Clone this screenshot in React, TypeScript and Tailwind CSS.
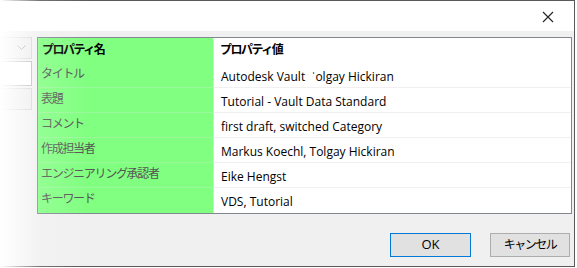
import React from 'react';

type Row = { label: string; value: string };

const rows: Row[] = [
  { label: 'タイトル', value: 'Autodesk Vault  ˈolgay Hickiran' },
  { label: '表題', value: 'Tutorial - Vault Data Standard' },
  { label: 'コメント', value: 'first draft, switched Category' },
  { label: '作成担当者', value: 'Markus Koechl, Tolgay Hickiran' },
  { label: 'エンジニアリング承認者', value: 'Eike Hengst' },
  { label: 'キーワード', value: 'VDS, Tutorial' },
];

const jp = "font-['Open_Sans','Noto_Sans_CJK_JP',sans-serif]";

export default function App() {
  return (
    <div className={`relative w-[577px] h-[268px] bg-white overflow-hidden text-[12px] text-black ${jp}`}>
      <div className="w-[575px] h-[267px] border-t border-r border-b border-[#595959] flex flex-col">
        {/* Title bar */}
        <div className="h-[30px] bg-white flex items-center justify-end pr-[20px] shrink-0">
          <svg width="12" height="12" viewBox="0 0 12 12" className="mt-[1px]">
            <path d="M1 1 L11 11 M11 1 L1 11" stroke="#222" strokeWidth="1.1" />
          </svg>
        </div>

        {/* Body */}
        <div className="flex-1 bg-[#f0f0f0] flex flex-col">
          <div className="flex mt-[6px]">
            {/* left hidden controls */}
            <div className="w-[32px] flex flex-col gap-[2px] shrink-0">
              <div className="h-[22px] border border-l-0 border-[#d0d0d0] bg-[#ececec] flex items-center justify-end pr-[5px]">
                <svg width="9" height="6" viewBox="0 0 9 6">
                  <path d="M0.5 0.5 L4.5 4.5 L8.5 0.5" stroke="#999" fill="none" />
                </svg>
              </div>
              <div className="h-[25px] border border-l-0 border-[#b5b5b5] bg-white" />
              <div className="h-[22px] border border-l-0 border-[#d0d0d0] bg-[#ececec]" />
            </div>

            <div className="ml-[5px] w-[535px] border border-[#828790] bg-white flex flex-col">
              {/* header */}
              <div className="flex h-[25px]">
                <div className="w-[176px] bg-[#80ff80] border-r border-[#e3e3e3] flex items-center pl-[4px] pb-[2px] font-bold tracking-[-1.5px]">
                  プロパティ名
                </div>
                <div className="flex-1 flex items-center pl-[6px] pb-[2px] font-bold tracking-[-1.5px]">
                  プロパティ値
                </div>
              </div>
              {rows.map((r, i) => (
                <div key={i} className={`flex h-[25px] ${i < rows.length - 1 ? 'border-b border-[#f0f0f0]' : ''}`}>
                  <div className={`w-[176px] bg-[#80ff80] border-r border-[#e3e3e3] pl-[3px] pt-[2px] text-[#555] tracking-[-1.3px] ${i < rows.length - 1 ? '-mb-px border-b border-b-[#9af79a]' : ''}`}>
                    {r.label}
                  </div>
                  <div className="flex-1 flex items-center pl-[7px] pt-[3px] whitespace-pre">
                    {r.value}
                  </div>
                </div>
              ))}
            </div>
          </div>

          {/* buttons */}
          <div className="flex justify-end gap-[19px] mt-[19px] pr-[4px]">
            <button className="w-[81px] h-[24px] bg-[#e1e1e1] border border-[#0078d7] flex items-center justify-center text-[13px]">
              OK
            </button>
            <button className="w-[80px] h-[24px] bg-[#e1e1e1] border border-[#adadad] flex items-center justify-center text-[12px] tracking-[-1.5px]">
              キャンセル
            </button>
          </div>
        </div>
      </div>

      {/* left fade */}
      <div className="pointer-events-none absolute left-0 top-0 h-full w-[90px] bg-linear-to-r from-white via-white/15 via-45% to-transparent" />
    </div>
  );
}
